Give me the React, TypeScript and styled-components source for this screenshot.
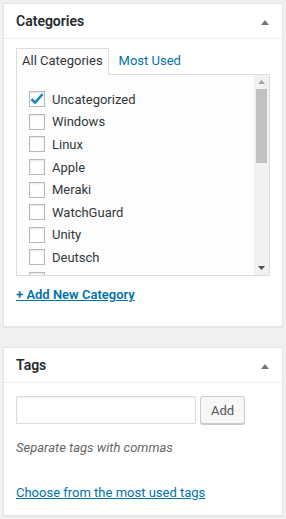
import React, { useState } from 'react'
import styled, { createGlobalStyle } from 'styled-components'

const LINK = '#0073aa'

const GlobalStyle = createGlobalStyle`
  html, body {
    margin: 0;
    padding: 0;
    background: #f1f1f1;
  }
  body {
    font-family: Roboto, 'Liberation Sans', sans-serif;
    font-size: 13px;
    color: #444;
  }
  * {
    box-sizing: border-box;
  }
`

const Page = styled.div`
  display: flex;
  flex-direction: column;
  gap: 20px;
  padding: 3px 3px 5px;
`

const Panel = styled.div`
  background: #fff;
  border: 1px solid #e5e5e5;
  box-shadow: 0 1px 1px rgba(0, 0, 0, 0.04);
`

const PanelHeader = styled.div`
  display: flex;
  align-items: center;
  justify-content: space-between;
  height: 35px;
  padding: 0 13px 0 12px;
  border-bottom: 1px solid #eee;
`

const PanelTitle = styled.h2`
  margin: 0;
  font-size: 14px;
  font-weight: 600;
  color: #23282d;
  line-height: 1;
`

const Toggle = styled.span`
  display: flex;
  color: #72777c;
  margin-top: 2px;
`

const PanelBody = styled.div<{ top: number; bottom: number }>`
  padding: ${(p) => p.top}px 12px ${(p) => p.bottom}px;
`

const Tabs = styled.ul`
  display: flex;
  margin: 0;
  padding: 0;
  list-style: none;
  position: relative;
  z-index: 1;
`

const Tab = styled.li<{ active?: boolean }>`
  height: 27px;
  padding: 0 5px;
  margin-right: 4px;
  margin-bottom: -1px;
  line-height: 24px;
  border: 1px solid ${(p) => (p.active ? '#ddd' : 'transparent')};
  border-bottom: none;
  background: ${(p) => (p.active ? '#fdfdfd' : 'transparent')};
  color: ${(p) => (p.active ? '#32373c' : LINK)};
  cursor: pointer;
`

const ListBox = styled.div`
  display: flex;
  height: 202px;
  border: 1px solid #ddd;
  background: #fdfdfd;
`

const ScrollArea = styled.div`
  flex: 1;
  overflow-y: auto;
  scrollbar-width: none;
  &::-webkit-scrollbar {
    display: none;
  }
`

const ScrollBar = styled.div`
  display: flex;
  flex-direction: column;
  width: 15px;
  background: #f1f1f1;
`

const ArrowButton = styled.div`
  display: flex;
  align-items: center;
  justify-content: center;
  height: 14px;
  color: #a3a3a3;
`

const Track = styled.div`
  flex: 1;
  padding: 0 2px;
`

const Thumb = styled.div`
  height: 74px;
  background: #c1c1c1;
`

const Checklist = styled.ul`
  margin: 0;
  padding: 13px 0 8px 12px;
  list-style: none;
`

const Item = styled.li`
  display: flex;
  align-items: center;
  gap: 7px;
  height: 22.6px;
  color: #32373c;
`

const Box = styled.span`
  display: flex;
  align-items: center;
  justify-content: center;
  width: 16px;
  height: 16px;
  border: 1px solid #b4b9be;
  background: #fff;
  box-shadow: inset 0 1px 2px rgba(0, 0, 0, 0.1);
  flex-shrink: 0;
`

const AddNew = styled.a`
  display: inline-block;
  margin-top: 9px;
  font-weight: 600;
  color: ${LINK};
  text-decoration: underline;
  line-height: 19px;
`

const TagRow = styled.div`
  display: flex;
  gap: 4px;
`

const TagInput = styled.input`
  width: 180px;
  height: 28px;
  border: 1px solid #ddd;
  box-shadow: inset 0 1px 2px rgba(0, 0, 0, 0.07);
  background: #fff;
  padding: 3px 5px;
  font: inherit;
  outline: none;
`

const Button = styled.button`
  height: 28px;
  padding: 0 10px;
  border: 1px solid #ccc;
  border-radius: 3px;
  background: #f7f7f7;
  box-shadow: 0 1px 0 #ccc;
  color: #555;
  font: inherit;
  font-size: 13px;
`

const Hint = styled.p`
  margin: 14px 0 0;
  line-height: 19px;
  font-style: italic;
  color: #666;
`

const TagLink = styled.a`
  display: inline-block;
  margin-top: 26px;
  line-height: 19px;
  color: ${LINK};
  text-decoration: underline;
`

const categories = [
  'Uncategorized',
  'Windows',
  'Linux',
  'Apple',
  'Meraki',
  'WatchGuard',
  'Unity',
  'Deutsch',
  'English',
  'Android',
  'Office 365',
  'Exchange',
  'VMware',
  'Hyper-V',
  'Azure',
  'Netzwerk',
  'Sicherheit',
  'PowerShell',
  'Hardware',
  'Software',
]

const Caret = () => (
  <Toggle>
    <svg width="8" height="5" viewBox="0 0 8 5">
      <polygon points="4,0 8,5 0,5" fill="currentColor" />
    </svg>
  </Toggle>
)

const Arrow = ({ down }: { down?: boolean }) => (
  <ArrowButton>
    <svg width="7" height="4" viewBox="0 0 7 4">
      <polygon points={down ? '0,0 7,0 3.5,4' : '3.5,0 7,4 0,4'} fill={down ? '#505050' : '#a3a3a3'} />
    </svg>
  </ArrowButton>
)

const Check = () => (
  <svg width="14" height="12" viewBox="0 0 14 12">
    <path d="M1.5 6.2 L5 9.6 L12.6 1.2" fill="none" stroke="#1e8cbe" strokeWidth="2.6" />
  </svg>
)

export default function App() {
  const [checked, setChecked] = useState<string[]>(['Uncategorized'])
  const [tab, setTab] = useState(0)

  const toggle = (name: string) => {
    setChecked((c) => (c.includes(name) ? c.filter((x) => x !== name) : [...c, name]))
  }

  return (
    <>
      <GlobalStyle />
      <Page>
        <Panel>
          <PanelHeader>
            <PanelTitle>Categories</PanelTitle>
            <Caret />
          </PanelHeader>
          <PanelBody top={9} bottom={22}>
            <Tabs>
              <Tab active={tab === 0} onClick={() => setTab(0)}>
                All Categories
              </Tab>
              <Tab active={tab === 1} onClick={() => setTab(1)}>
                Most Used
              </Tab>
            </Tabs>
            <ListBox>
              <ScrollArea>
                <Checklist>
                  {categories.map((name) => (
                    <Item key={name} onClick={() => toggle(name)}>
                      <Box>{checked.includes(name) && <Check />}</Box>
                      {name}
                    </Item>
                  ))}
                </Checklist>
              </ScrollArea>
              <ScrollBar>
                <Arrow />
                <Track>
                  <Thumb />
                </Track>
                <Arrow down />
              </ScrollBar>
            </ListBox>
            <AddNew href="#">+ Add New Category</AddNew>
          </PanelBody>
        </Panel>
        <Panel>
          <PanelHeader>
            <PanelTitle>Tags</PanelTitle>
            <Caret />
          </PanelHeader>
          <PanelBody top={13} bottom={13}>
            <TagRow>
              <TagInput type="text" />
              <Button>Add</Button>
            </TagRow>
            <Hint>Separate tags with commas</Hint>
            <TagLink href="#">Choose from the most used tags</TagLink>
          </PanelBody>
        </Panel>
      </Page>
    </>
  )
}
